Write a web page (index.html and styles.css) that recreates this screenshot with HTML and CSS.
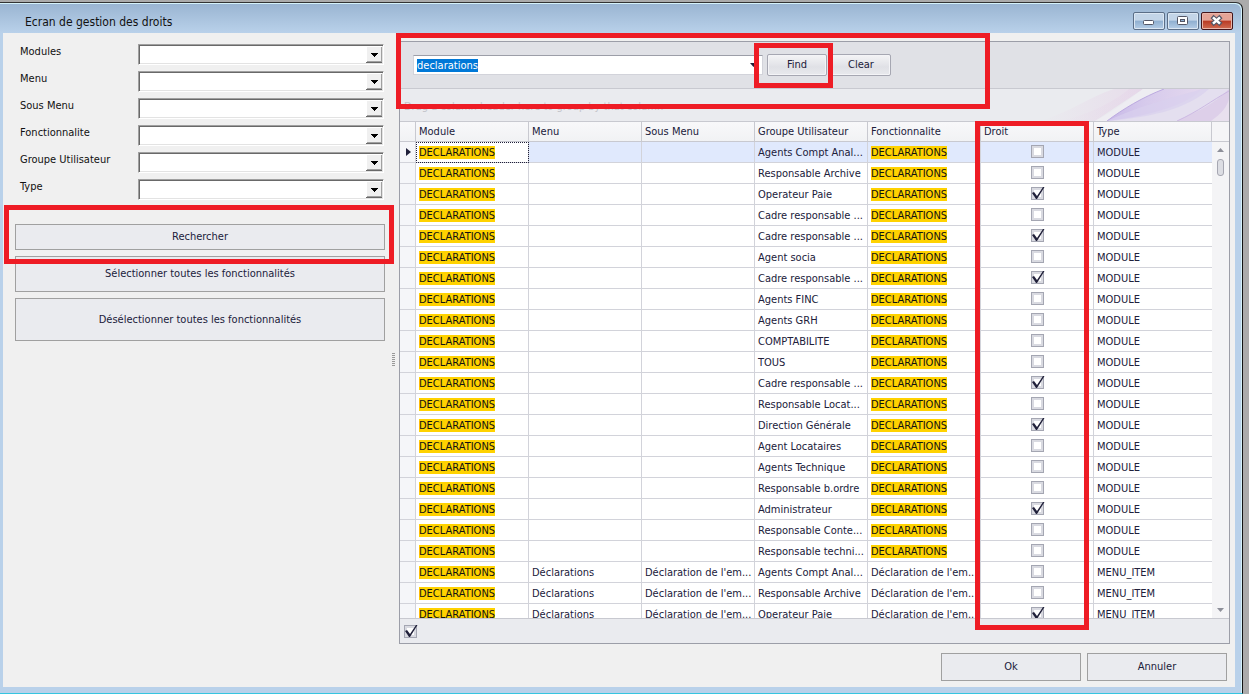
FILE: index.html
```
<!DOCTYPE html>
<html lang="fr">
<head>
  <meta charset="UTF-8">
  <title>Ecran de gestion des droits</title>
  <link rel="stylesheet" href="styles.css">
</head>
<body>
  <div class="window">
    <header class="titlebar">
      <h1>Ecran de gestion des droits</h1>
      <div class="window-buttons">
        <button type="button" class="win-btn" aria-label="Réduire">
          <svg width="32" height="18" viewBox="0 0 32 18"><rect x="10.5" y="8.5" width="10" height="4" rx="1" fill="#fff" stroke="#535666"/></svg>
        </button>
        <button type="button" class="win-btn" aria-label="Agrandir">
          <svg width="32" height="18" viewBox="0 0 32 18"><rect x="10.5" y="4.5" width="10" height="8" rx="1" fill="#fff" stroke="#535666"/><rect x="13.5" y="7.5" width="4" height="2" fill="#8fb0d2" stroke="#535666"/></svg>
        </button>
        <button type="button" class="win-btn win-close" aria-label="Fermer">
          <svg width="32" height="18" viewBox="0 0 32 18"><path d="M11 4.500l9 8M20 4.500l-9 8" stroke="#535666" stroke-width="4.500" fill="none"/><path d="M12 5.400l7 6.200M19 5.400l-7 6.200" stroke="#fff" stroke-width="2.600" fill="none"/></svg>
        </button>
      </div>
    </header>

    <div class="client">
      <aside class="filters">
        <form class="fields">
          <label for="modules">Modules</label>
          <select id="modules"><option></option></select>
          <label for="menu">Menu</label>
          <select id="menu"><option></option></select>
          <label for="sousmenu">Sous Menu</label>
          <select id="sousmenu"><option></option></select>
          <label for="fonctionnalite">Fonctionnalite</label>
          <select id="fonctionnalite"><option></option></select>
          <label for="groupe">Groupe Utilisateur</label>
          <select id="groupe"><option></option></select>
          <label for="type">Type</label>
          <select id="type"><option></option></select>
        </form>
        <div class="actions">
          <button type="button" class="btn btn-search">Rechercher</button>
          <button type="button" class="btn btn-select">Sélectionner toutes les fonctionnalités</button>
          <button type="button" class="btn btn-unselect">Désélectionner toutes les fonctionnalités</button>
          <span class="frame frame-rechercher"></span>
        </div>
        <span class="splitter"></span>
      </aside>

      <main class="content">
        <section class="grid">
          <div class="find-panel">
            <div class="find-box">
              <input type="text" id="find" value="declarations" aria-label="Recherche">
              <svg class="find-arrow" width="7" height="4" viewBox="0 0 7 4"><path d="M0 0h7L3.500 4z" fill="#20203a"/></svg>
            </div>
            <button type="button" class="find-btn">Find</button>
            <button type="button" class="find-btn">Clear</button>
            <span class="frame frame-panel"></span>
            <span class="frame frame-find"></span>
          </div>

          <div class="group-panel">
            <span>Drag a column header here to group by that column</span>
            <svg class="swoosh" width="190" height="32" viewBox="0 0 190 32">
              <defs>
                <linearGradient id="pink" x1="0" x2="1"><stop offset="0" stop-color="#e8d6e8" stop-opacity="0"/><stop offset="1" stop-color="#e5d3e8"/></linearGradient>
                <linearGradient id="violet" x1="0" x2="1"><stop offset="0" stop-color="#c8b9e8"/><stop offset="0.4" stop-color="#d6caec"/><stop offset="1" stop-color="#e4d8ee"/></linearGradient>
              </defs>
              <path d="M0 32C30 24 50 8 75 0H104L56 32z" fill="url(#pink)" opacity=".6"/>
              <path d="M20 32C50 26 76 12 90 0H104L56 32z" fill="url(#pink)" opacity=".5"/>
              <path d="M56 32C72 24 88 12 104 0H125C104 8 84 20 68 32z" fill="#eeedf2"/>
              <path d="M68 32C84 20 104 8 125 0H190V32z" fill="#e4dfef"/>
              <path d="M68 32C84 20 104 8 125 0H163C150 14 118 26 68 32z" fill="url(#violet)"/>
              <path d="M68 32C98 18 128 10 163 0H170C150 18 118 28 68 32z" fill="#d9d0ee" opacity=".7"/>
              <path d="M138 32C160 22 176 14 190 0V32z" fill="#ddcfe9"/>
              <path d="M138 32C160 22 172 12 190 2" stroke="#ccb8e3" fill="none"/>
              <path d="M68 32C84 20 104 8 125 0" stroke="#bcaae0" fill="none"/>
              <path d="M172 32C182 25 188 18 190 10V32z" fill="#e8e0ee"/>
            </svg>
          </div>

          <div class="grid-body">
            <div class="table-wrap">
              <table>
                <colgroup>
                  <col class="c-indicator"><col class="c-data" span="6"><col>
                </colgroup>
                <thead>
                  <tr>
                    <th></th>
                    <th>Module</th>
                    <th>Menu</th>
                    <th>Sous Menu</th>
                    <th>Groupe Utilisateur</th>
                    <th>Fonctionnalite</th>
                    <th>Droit</th>
                    <th>Type</th>
                  </tr>
                </thead>
                <tbody id="rows"></tbody>
              </table>
            </div>
            <div class="scroll">
              <div class="scroll-head"></div>
              <div class="scroll-track">
                <svg width="7" height="4" viewBox="0 0 7 4"><path d="M0 4h7L3.500 0z" fill="#8d8f99"/></svg>
                <span class="scroll-thumb"></span>
                <svg class="scroll-down" width="7" height="4" viewBox="0 0 7 4"><path d="M0 0h7L3.500 4z" fill="#8d8f99"/></svg>
              </div>
            </div>
            <span class="frame frame-droit"></span>
          </div>

          <div class="filter-bar">
            <input type="checkbox" class="check" checked aria-label="Activer le filtre">
          </div>
        </section>

        <footer class="footer">
          <button type="button" class="btn">Ok</button>
          <button type="button" class="btn">Annuler</button>
        </footer>
      </main>
    </div>
  </div>

  <script>
    // [groupe, droit]
    const modules = [
      ["Agents Compt Anal...", 0],
      ["Responsable Archive", 0],
      ["Operateur Paie", 1],
      ["Cadre responsable ...", 0],
      ["Cadre responsable ...", 1],
      ["Agent socia", 0],
      ["Cadre responsable ...", 1],
      ["Agents FINC", 0],
      ["Agents GRH", 0],
      ["COMPTABILITE", 0],
      ["TOUS", 0],
      ["Cadre responsable ...", 1],
      ["Responsable Locat...", 0],
      ["Direction Générale", 1],
      ["Agent Locataires", 0],
      ["Agents Technique", 0],
      ["Responsable b.ordre", 0],
      ["Administrateur", 1],
      ["Responsable Conte...", 0],
      ["Responsable techni...", 0]
    ];
    const items = [
      ["Agents Compt Anal...", 0],
      ["Responsable Archive", 0],
      ["Operateur Paie", 1]
    ];

    const hit = "<mark>DECLARATIONS</mark>";
    const arrow = '<svg width="5" height="8" viewBox="0 0 5 8"><path d="M0 0l5 4-5 4z" fill="#20203a"/></svg>';

    function row(r, menu, sous, fonc, type, first) {
      return `<tr${first ? ' class="focused"' : ""}>
        <td>${first ? arrow : ""}</td><td>${hit}</td><td>${menu}</td><td>${sous}</td>
        <td>${r[0]}</td><td>${fonc}</td>
        <td class="droit"><input type="checkbox" class="check" aria-label="Droit ${r[0]}"${r[1] ? " checked" : ""}></td>
        <td>${type}</td></tr>`;
    }

    const decl = "Déclaration de l'em...";
    document.getElementById("rows").innerHTML =
      modules.map((r, i) => row(r, "", "", hit, "MODULE", i === 0)).join("") +
      items.map(r => row(r, "Déclarations", decl, decl, "MENU_ITEM", false)).join("");

    const find = document.getElementById("find");
    find.focus();
    find.select();
  </script>
</body>
</html>
```
FILE: styles.css
```
* {
  box-sizing: border-box;
}

body {
  margin: 0;
  background: #ababab;
  font-family: "DejaVu Sans Condensed", "Noto Sans", sans-serif;
  font-size: 11px;
  line-height: 14px;
  color: #20203a;
}

button,
input,
select {
  font: inherit;
  color: inherit;
}

/* window frame */
.window {
  display: flex;
  flex-direction: column;
  height: calc(100vh - 2px);
  margin: 2px 6px 0 0;
  padding: 0 7px 6px 3px;
  background: linear-gradient(#99b4d1, #b9d1ea 30px);
  border-top: 1px solid #333;
  border-right: 1px solid #111;
  border-bottom: 1px solid #35c5e0;
  border-radius: 0 7px 0 0;
  box-shadow: inset -1px 1px 0 #d5f3fb;
}

.titlebar {
  display: flex;
  flex: none;
  align-items: center;
  justify-content: space-between;
  height: 30px;
  padding: 6px 2px 0 22px;
}

.titlebar h1 {
  margin: 0;
  padding-top: 2px;
  font-size: 12px;
  font-weight: normal;
  color: #111;
}

.window-buttons {
  display: flex;
  gap: 2px;
}

.win-btn {
  width: 32px;
  height: 18px;
  padding: 0;
  border: 1px solid #5b6e87;
  border-radius: 2px;
  background: linear-gradient(#c3d5e8 45%, #8fafd0 50%, #b5cde6);
  box-shadow: inset 0 0 0 1px #dbe7f3;
}

.win-btn svg {
  display: block;
  margin: -1px;
}

.win-close {
  border-color: #43141a;
  background: linear-gradient(#e5a396 45%, #b93a24 50%, #cf6c53);
  box-shadow: inset 0 0 0 1px #e9b5a9;
}

.client {
  display: flex;
  flex: 1;
  min-height: 0;
  background: #f0f0f0;
}

/* left side */
.filters {
  position: relative;
  flex: none;
  width: 396px;
  padding: 11px 14px 0 12px;
}

.fields {
  display: grid;
  grid-template-columns: 118px 246px;
  row-gap: 6px;
  padding-left: 5px;
  color: #111;
}

.fields label {
  line-height: 16px;
}

.fields select {
  appearance: none;
  height: 21px;
  border: 1px solid;
  border-color: #a0a0a0 #fff #fff #a0a0a0;
  border-radius: 0;
  box-shadow: inset 1px 1px 0 #696969, inset -1px -1px 0 #e3e3e3;
  background: #fff url("data:image/svg+xml,%3Csvg xmlns='http://www.w3.org/2000/svg' width='17' height='17'%3E%3Cpath fill='%23696969' d='M0 0h17v17H0z'/%3E%3Cpath fill='%23fff' d='M0 0h16v16H0z'/%3E%3Cpath fill='%23a0a0a0' d='M1 1h15v15H1z'/%3E%3Cpath fill='%23f0f0f0' d='M1 1h14v14H1z'/%3E%3Cpath d='M5 7h7v1h-1v1h-1v1H9v1H8v-1H7V9H6V8H5z'/%3E%3C/svg%3E") no-repeat right 0 top 1px;
}

.actions {
  position: relative;
  display: flex;
  flex-direction: column;
  gap: 6px;
  margin-top: 24px;
}

.btn {
  padding: 0;
  border: 1px solid #a0a0a0;
  background: #eaebef;
}

.btn-search {
  height: 26px;
}

.btn-select {
  height: 36px;
}

.btn-unselect {
  height: 43px;
}

.splitter {
  position: absolute;
  right: 4px;
  top: 320px;
  width: 3px;
  height: 13px;
  background: repeating-linear-gradient(#999 0 1px, transparent 1px 2px);
}

/* right side */
.content {
  display: flex;
  flex: 1;
  flex-direction: column;
  min-width: 0;
  padding: 8px 5px 6px 0;
}

.grid {
  display: flex;
  flex: 1;
  flex-direction: column;
  min-height: 0;
  border: 1px solid #9c9ea8;
  background: #eaebef;
}

.find-panel {
  position: relative;
  display: flex;
  flex: none;
  align-items: center;
  gap: 4px;
  height: 47px;
  padding-left: 13px;
  border-bottom: 1px solid #c8c9d0;
  background: #e0e1e6;
}

.find-box {
  position: relative;
  width: 350px;
}

.find-box input {
  display: block;
  width: 100%;
  height: 20px;
  padding: 0 3px;
  border: 1px solid #d2d3da;
  border-top-color: #9c9ea8;
  outline: none;
  background: #fff;
}

.find-box input::selection {
  background: #0078d7;
  color: #fff;
}

.find-arrow {
  position: absolute;
  right: 6px;
  top: 8px;
}

.find-btn {
  width: 60px;
  height: 22px;
  padding: 0;
  border: 1px solid #a6a7b2;
  border-radius: 2px;
  background: linear-gradient(#f4f4f6, #e0e1e6 60%, #e8e9ed);
  box-shadow: inset 0 0 0 1px #f4f4f7;
}

.group-panel {
  position: relative;
  display: flex;
  flex: none;
  align-items: center;
  height: 32px;
  padding: 4px 0 0 4px;
  color: #c3c4ca;
}

.swoosh {
  position: absolute;
  right: 0;
  top: 0;
}

.grid-body {
  position: relative;
  display: flex;
  flex: 1;
  min-height: 0;
}

.table-wrap {
  flex: 1;
  min-width: 0;
  overflow: hidden;
  background: #fff;
}

table {
  width: 100%;
  table-layout: fixed;
  border-collapse: separate;
  border-spacing: 0;
}

.c-indicator {
  width: 16px;
}

.c-data {
  width: 113px;
}

th,
td {
  height: 21px;
  padding: 1px 0 0 3px;
  border-right: 1px solid #d2d3da;
  border-bottom: 1px solid #d2d3da;
  text-align: left;
  font-weight: normal;
  white-space: nowrap;
}

th {
  padding-top: 0;
  border-top: 1px solid #c8c9d0;
  border-color: #c8c9d0;
  background: linear-gradient(#f8f8fa, #f1f2f4);
}

td:first-child {
  padding: 0 0 0 6px;
  background: #f5f6f9;
}

td:last-child {
  border-right: 0;
}

td svg {
  display: block;
}

.focused td:not(:first-child) {
  background: #e0e9fd;
}

.focused td:nth-child(2) {
  background: #fff;
  outline: 1px dotted #20203a;
  outline-offset: -1px;
}

mark {
  background: #ffd200;
  color: #111;
}

td.droit {
  padding: 0 0 2px 1px;
}

.check {
  appearance: none;
  display: block;
  width: 14px;
  height: 14px;
  margin: 0;
  background: url("data:image/svg+xml,%3Csvg xmlns='http://www.w3.org/2000/svg' width='14' height='14'%3E%3Cpath fill='%23a4a6b2' d='M0 1h13v13H0z'/%3E%3Cpath fill='%23d9dae1' d='M1 2h11v11H1z'/%3E%3Cpath fill='%23fff' d='M3 4h7v7H3z'/%3E%3C/svg%3E");
}

.check:checked {
  background: url("data:image/svg+xml,%3Csvg xmlns='http://www.w3.org/2000/svg' width='14' height='14'%3E%3Cpath fill='%23a4a6b2' d='M0 1h13v13H0z'/%3E%3Cpath fill='%23d9dae1' d='M1 2h11v11H1z'/%3E%3Cpath fill='%23fff' d='M3 4h7v7H3z'/%3E%3Cpath fill='%2320203a' d='M1 7l2-1 3 4 6-9h1.500L6 13H5z'/%3E%3C/svg%3E");
}

.droit .check {
  margin: 0 auto;
}

.scroll {
  display: flex;
  flex: none;
  flex-direction: column;
  width: 17px;
}

.scroll-head {
  height: 21px;
  border-top: 1px solid #c8c9d0;
  border-bottom: 1px solid #c8c9d0;
  background: #f5f5f7;
}

.scroll-track {
  display: flex;
  flex: 1;
  flex-direction: column;
  align-items: center;
  padding: 6px 0;
  background: #f4f4f6;
}

.scroll-thumb {
  width: 7px;
  height: 17px;
  margin-top: 7px;
  border: 1px solid #a6a7b2;
  border-radius: 3px;
  background: #dcdde3;
}

.scroll-down {
  margin-top: auto;
}

.filter-bar {
  display: flex;
  flex: none;
  align-items: center;
  height: 25px;
  padding-left: 4px;
  border-top: 1px solid #c8c9d0;
  background: #eaebef;
}

.footer {
  display: flex;
  flex: none;
  justify-content: flex-end;
  gap: 6px;
  padding: 9px 3px 0 0;
}

.footer .btn {
  width: 140px;
  height: 28px;
}

/* red frames drawn over the screen */
.frame {
  position: absolute;
  z-index: 2;
  border: 5px solid #ee1c25;
  pointer-events: none;
}

.frame-rechercher {
  top: -19px;
  left: -11px;
  right: -9px;
  height: 59px;
}

.frame-panel {
  top: -9px;
  left: -4px;
  width: 594px;
  height: 76px;
}

.frame-find {
  top: 1px;
  left: 354px;
  width: 79px;
  height: 45px;
}

.frame-droit {
  top: 0;
  bottom: -12px;
  left: 575px;
  width: 114px;
}
```
